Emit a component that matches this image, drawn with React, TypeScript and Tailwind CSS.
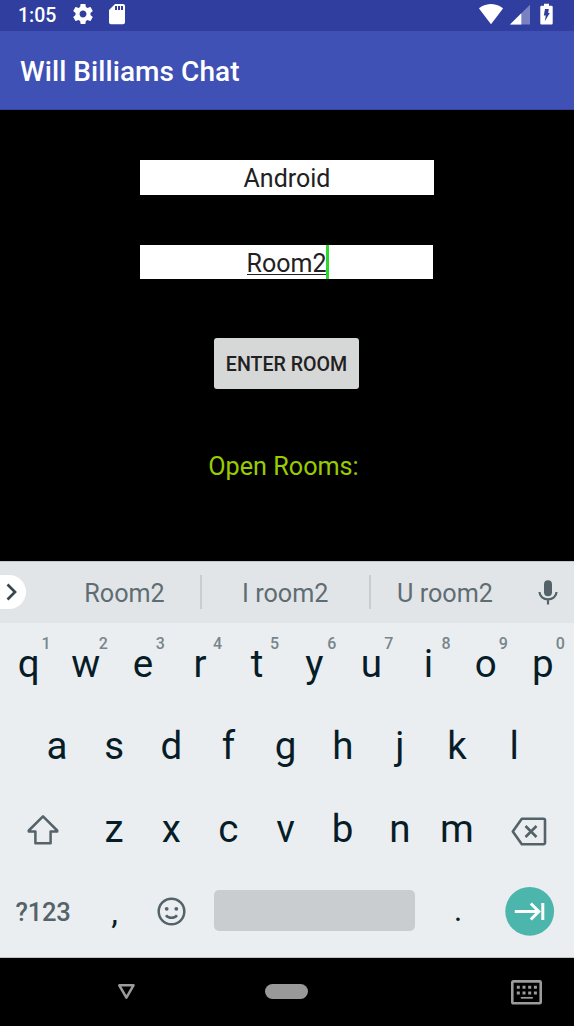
import React from "react";

function StatusBar() {
  return (
    <div className="flex h-[31px] items-start bg-[#303f9f] text-white">
      <span className="ml-[18px] mt-[5px] w-[53px] text-[19.5px] leading-[22px] font-medium">1:05</span>
      <svg className="mt-[2px] h-6 w-6" viewBox="0 0 24 24" fill="currentColor">
        <path d="M19.43 12.98c.04-.32.07-.64.07-.98s-.03-.66-.07-.98l2.11-1.65c.19-.15.24-.42.12-.64l-2-3.46c-.12-.22-.39-.3-.61-.22l-2.49 1c-.52-.4-1.08-.73-1.69-.98l-.38-2.65C14.46 2.18 14.25 2 14 2h-4c-.25 0-.46.18-.49.42l-.38 2.65c-.61.25-1.17.59-1.69.98l-2.49-1c-.23-.09-.49 0-.61.22l-2 3.46c-.13.22-.07.49.12.64l2.11 1.65c-.04.32-.07.65-.07.98s.03.66.07.98l-2.11 1.65c-.19.15-.24.42-.12.64l2 3.46c.12.22.39.3.61.22l2.49-1c.52.4 1.08.73 1.69.98l.38 2.65c.03.24.24.42.49.42h4c.25 0 .46-.18.49-.42l.38-2.65c.61-.25 1.17-.59 1.69-.98l2.49 1c.23.09.49 0 .61-.22l2-3.46c.12-.22.07-.49-.12-.64l-2.11-1.65zM12 15.5c-1.93 0-3.5-1.57-3.5-3.5s1.57-3.5 3.5-3.5 3.5 1.57 3.5 3.5-1.57 3.5-3.5 3.5z" />
      </svg>
      <svg className="ml-[10px] mt-[2px] h-6 w-6" viewBox="0 0 24 24" fill="currentColor">
        <path d="M18 2h-8L4.02 8 4 20.3c0 1.1.9 2 2 2h12c1.1 0 2-.9 2-2V4c0-1.1-.9-2-2-2zm-6 6h-2V4h2v4zm3 0h-2V4h2v4zm3 0h-2V4h2v4z" />
      </svg>
      <svg className="ml-auto mr-[6px] mt-[2px] h-6 w-[26px]" viewBox="0 0 26 24" fill="currentColor">
        <path d="M13 22.2 1 6.400C1.500 6 6 2 13 2s11.500 4 12 4.400z" />
      </svg>
      <svg className="mr-[10px] mt-[4px] h-[21px] w-[20px]" viewBox="0 0 20 21" fill="currentColor">
        <path d="M0 20.5 20 .8V20.500z" opacity=".35" />
        <path d="M0 20.500 11.300 9.300V20.500z" />
      </svg>
      <svg className="mr-[21px] mt-[3px] h-[22px] w-[13px]" viewBox="0 0 13 22">
        <path d="M4 .8h5v2h2.500a1.200 1.200 0 0 1 1.200 1.200v16.300a1.200 1.200 0 0 1-1.200 1.200h-10A1.200 1.200 0 0 1 .3 20.300V4a1.200 1.200 0 0 1 1.200-1.200H4z" fill="#fff" />
        <path d="M5 6h3.800L8.200 10h1.600L4.800 18.200 5.800 12.400H3.800z" fill="#303f9f" />
      </svg>
    </div>
  );
}

function Chat() {
  return (
    <main className="flex h-[451px] flex-col items-center bg-black pt-[50px]">
      <div className="h-[34.5px] w-[294px] bg-white text-center text-[25px] leading-[37px] text-[#212121]">
        Android
      </div>
      <div className="mt-[50px] mr-px flex h-[34.5px] w-[293px] justify-center bg-white text-[25px] leading-[37px] text-[#212121]">
        <span className="relative h-[34px]">
          Room2
          <span className="absolute top-[29px] left-0 h-px w-full bg-[#212121]" />
          <span className="absolute top-0 -right-[3px] h-full w-[3px] bg-[#2fd82f]" />
        </span>
      </div>
      <button className="mt-[59px] mr-px h-[51px] w-[145px] rounded-[3px] bg-[#d6d7d7] pt-px text-[19.6px] leading-[51px] font-medium text-[#212121]">
        ENTER ROOM
      </button>
      <div className="mt-[63px] pr-[7px] text-[25.2px] leading-[30px] text-[#99cc00]">Open Rooms:</div>
    </main>
  );
}

function Suggestions() {
  return (
    <div className="flex h-[62px] items-center border-t border-[#c4c6c8] bg-[#e2e5e8] pb-px text-[25.2px] text-[#5f6d73]">
      <div className="flex h-[34px] w-[26px] items-center rounded-r-full bg-white">
        <svg className="ml-[6px] h-[18px] w-[12px]" viewBox="0 0 12 18" fill="none" stroke="#37474f" strokeWidth="2.7">
          <path d="m1.500 1.500 7.500 7.500-7.500 7.500" />
        </svg>
      </div>
      <div className="w-[174px] pl-[23px] pt-[3px] text-center leading-[34px]">Room2</div>
      <div className="h-[34px] w-[1.5px] bg-[#c9cdd0]" />
      <div className="w-[167.5px] pt-[3px] text-center leading-[34px]">I room2</div>
      <div className="h-[34px] w-[2px] bg-[#c9cdd0]" />
      <div className="w-[148px] pt-[3px] text-center leading-[34px]">U room2</div>
      <svg className="ml-[19px] h-[25px] w-[20px]" viewBox="0 0 20 25" fill="none">
        <rect x="6" y=".2" width="8" height="16" rx="4" fill="#546269" />
        <path d="M1.500 12c0 4.500 4 7.300 8.500 7.300s8.500-2.800 8.500-7.300M10 19v5.500" stroke="#546269" strokeWidth="2.2" />
      </svg>
    </div>
  );
}

function Key({ label, hint }: { label: string; hint?: string }) {
  return (
    <div className="relative flex h-[82px] w-[57.15px] justify-center text-[38.5px] leading-[81px] text-[#061d27]">
      {label}
      {hint && (
        <span className="absolute top-[12px] left-[41.5px] text-[16px] leading-[18px] font-medium text-[#78858a]">{hint}</span>
      )}
    </div>
  );
}

function Keyboard() {
  return (
    <section className="h-[335px] border-b border-[#c2c4c6] bg-[#ebeef1]">
      <div className="flex h-[82px]">
        {"qwertyuiop".split("").map((c, i) => (
          <Key key={c} label={c} hint={String((i + 1) % 10)} />
        ))}
      </div>
      <div className="flex h-[83px] pl-[28.5px]">
        {"asdfghjkl".split("").map((c) => (
          <Key key={c} label={c} />
        ))}
      </div>
      <div className="flex h-[83px]">
        <div className="w-[85.5px]">
          <svg className="mt-[26px] ml-[27px] h-[32px] w-[32px]" viewBox="0 0 32 32" fill="none" stroke="#546269" strokeWidth="2.5" strokeLinejoin="round">
            <path d="M16 2.300 1.800 16.500v1H8.400V29.200h15.200V17.500h6.600v-1z" />
          </svg>
        </div>
        {"zxcvbnm".split("").map((c) => (
          <Key key={c} label={c} />
        ))}
        <svg className="mt-[29px] ml-[26px] h-[30px] w-[36px]" viewBox="0 0 36 30" fill="none" stroke="#546269" strokeWidth="2.6" strokeLinejoin="round">
          <path d="M10.800 1.800H32.500a1.500 1.500 0 0 1 1.500 1.500V25.700a1.500 1.500 0 0 1-1.500 1.500H10.800L1.800 14.500zM14.500 9l11 11m0-11-11 11" />
        </svg>
      </div>
      <div className="flex h-[86px] items-start pt-px">
        <div className="w-[86px] pt-[23px] text-center text-[25.5px] leading-[34px] font-medium tracking-[-0.2px] text-[#546269]">?123</div>
        <div className="w-[57px] text-center text-[34px] leading-[80px] text-[#061d27]">,</div>
        <div className="w-[71px]">
          <svg className="mt-[25px] ml-[14px] h-[30px] w-[30px]" viewBox="0 0 30 30" fill="none" stroke="#546269" strokeWidth="2.5">
            <circle cx="14.500" cy="14.500" r="12.800" />
            <path d="M9 18.200c2.500 3.500 8.500 3.500 11 0" />
            <circle cx="9.700" cy="11.800" r="1.900" fill="#546269" stroke="none" />
            <circle cx="19.300" cy="11.800" r="1.900" fill="#546269" stroke="none" />
          </svg>
        </div>
        <div className="mt-[18px] h-[40.5px] w-[201px] rounded-[5px] bg-[#c9cdd0]" />
        <div className="w-[85px] pl-px text-center text-[31px] leading-[78px] text-[#061d27]">.</div>
        <svg className="ml-[5px] mt-[14px] h-[50px] w-[50px]" viewBox="0 0 50 50" fill="none">
          <circle cx="24.700" cy="25.300" r="24.400" fill="#4db6ac" />
          <path d="M9.800 25.500H34M25.800 17.500l8 8-8 8M37.800 17v17" stroke="#fff" strokeWidth="3" />
        </svg>
      </div>
    </section>
  );
}

function NavigationBar() {
  return (
    <div className="flex h-[68px] items-start bg-black">
      <svg className="mt-[25px] ml-[117px] h-[17px] w-[19px]" viewBox="0 0 19 17" fill="none" stroke="#9c9c9c" strokeWidth="2.5" strokeLinejoin="round">
        <path d="M2.300 2.300h14.200L9.400 14.700z" />
      </svg>
      <div className="mt-[25.5px] ml-[129px] h-[15.5px] w-[42.5px] rounded-full bg-[#999]" />
      <svg className="mt-[22px] ml-[203.5px] h-[25px] w-[31px]" viewBox="0 0 31 25" fill="none">
        <rect x="1.300" y="1.400" width="28.400" height="21.900" rx="1" stroke="#9c9c9c" strokeWidth="2.6" />
        <path d="M5.800 7.300h20.500M5.800 13h20.500" stroke="#9c9c9c" strokeWidth="3" strokeDasharray="3 2.7" />
        <path d="M9.800 17.800h12" stroke="#9c9c9c" strokeWidth="1.7" />
      </svg>
    </div>
  );
}

export default function App() {
  return (
    <div className="flex h-[1026px] w-[574px] flex-col overflow-hidden bg-black font-['Roboto',sans-serif]">
      <StatusBar />
      <header className="h-[79px] border-b border-[#35449b] bg-[#3f51b5] pt-[23px] pl-[20px] text-[28px] leading-[36px] font-medium tracking-[0.07px] text-white">
        Will Billiams Chat
      </header>
      <Chat />
      <Suggestions />
      <Keyboard />
      <NavigationBar />
    </div>
  );
}
